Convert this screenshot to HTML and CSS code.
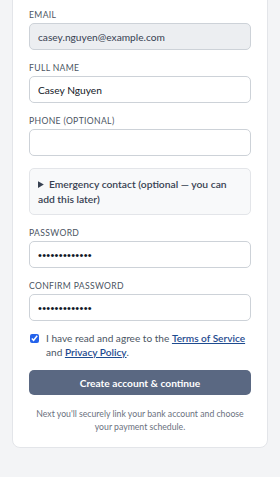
FILE: index.html
```html
<!DOCTYPE html>
<html lang="en">
<head>
    <meta charset="UTF-8">
    <meta name="viewport" content="width=device-width, initial-scale=1.0">
    <title>Create account</title>
    <link rel="stylesheet" href="styles.css">
</head>
<body>
    <div class="card">
        <form action="" method="post">
            <div class="field">
                <label for="email">Email</label>
                <input type="email" class="input" id="email" value="casey.nguyen@example.com" disabled>
            </div>
            <div class="field">
                <label for="name">Full name</label>
                <input type="text" class="input" id="name" value="Casey Nguyen">
            </div>
            <div class="field">
                <label for="phone">Phone (optional)</label>
                <input type="tel" class="input" id="phone">
            </div>
            <details class="extra">
                <summary>Emergency contact (optional — you can add this later)</summary>
            </details>
            <div class="field">
                <label for="password">Password</label>
                <input type="password" class="input" id="password" value="supersecret12">
            </div>
            <div class="field">
                <label for="confirm">Confirm password</label>
                <input type="password" class="input" id="confirm" value="supersecret12">
            </div>
            <label class="agree">
                <input type="checkbox" class="chekr" checked>
                <span>I have read and agree to the <a href="#">Terms of Service</a> and <a href="#">Privacy Policy</a>.</span>
            </label>
            <button type="submit">Create account &amp; continue</button>
            <p class="note">Next you'll securely link your bank account and choose your payment schedule.</p>
        </form>
    </div>
</body>
</html>
```

FILE: styles.css
```css
body{
    margin: 0;
    padding: 0 12px;
    background-color: #f3f4f6;
    font-family: Lato, "Noto Sans", sans-serif;
    color: #1f2937;
}

.card{
    margin-top: -12px;
    background-color: #fff;
    border: 1px solid #e3e5e9;
    border-radius: 8px;
    padding: 16px 16px 14px;
}

form{
    display: flex;
    flex-direction: column;
    gap: 8px;
}

.field{
    display: flex;
    flex-direction: column;
}

.field label{
    font-size: 8.6px;
    line-height: 12px;
    padding-top: 4px;
    margin-bottom: 2px;
    text-transform: uppercase;
    letter-spacing: 0.35px;
    color: #4b5563;
}

.input{
    box-sizing: border-box;
    height: 27px;
    padding: 0 8px;
    border: 1px solid #cdd2d8;
    border-radius: 5px;
    font-family: inherit;
    font-size: 10.2px;
    color: #111827;
    background-color: #fff;
}

.input:disabled{
    background-color: #eceef1;
    color: #374151;
}

.input[type="password"]{
    font-family: "Liberation Sans", Arial, sans-serif;
    font-size: 11px;
    letter-spacing: 0.3px;
}

.input:focus{
    outline: none;
}

.extra{
    margin-top: 4px;
    padding: 8px 8px 7px;
    border: 1px solid #e3e5e9;
    border-radius: 5px;
    background-color: #f8f9fa;
}

.extra summary{
    font-size: 10.3px;
    line-height: 15px;
    font-weight: 600;
    color: #374151;
    cursor: pointer;
}

.agree{
    display: flex;
    align-items: flex-start;
    gap: 7px;
    margin-top: 2px;
    font-size: 10.1px;
    line-height: 14px;
    color: #4b5563;
}

.chekr{
    flex: none;
    width: 9px;
    height: 9px;
    margin: 3px 0 0 1px;
    accent-color: #2563eb;
}

.agree a{
    color: #1e4b8f;
    font-weight: 600;
}

button{
    height: 25px;
    margin-top: 3px;
    border: none;
    border-radius: 5px;
    background-color: #5a6882;
    color: #fff;
    font-family: inherit;
    font-size: 10.2px;
    font-weight: 700;
}

.note{
    margin: 5px 4px 0;
    font-size: 8.7px;
    line-height: 12.5px;
    text-align: center;
    color: #6b7280;
}
```
